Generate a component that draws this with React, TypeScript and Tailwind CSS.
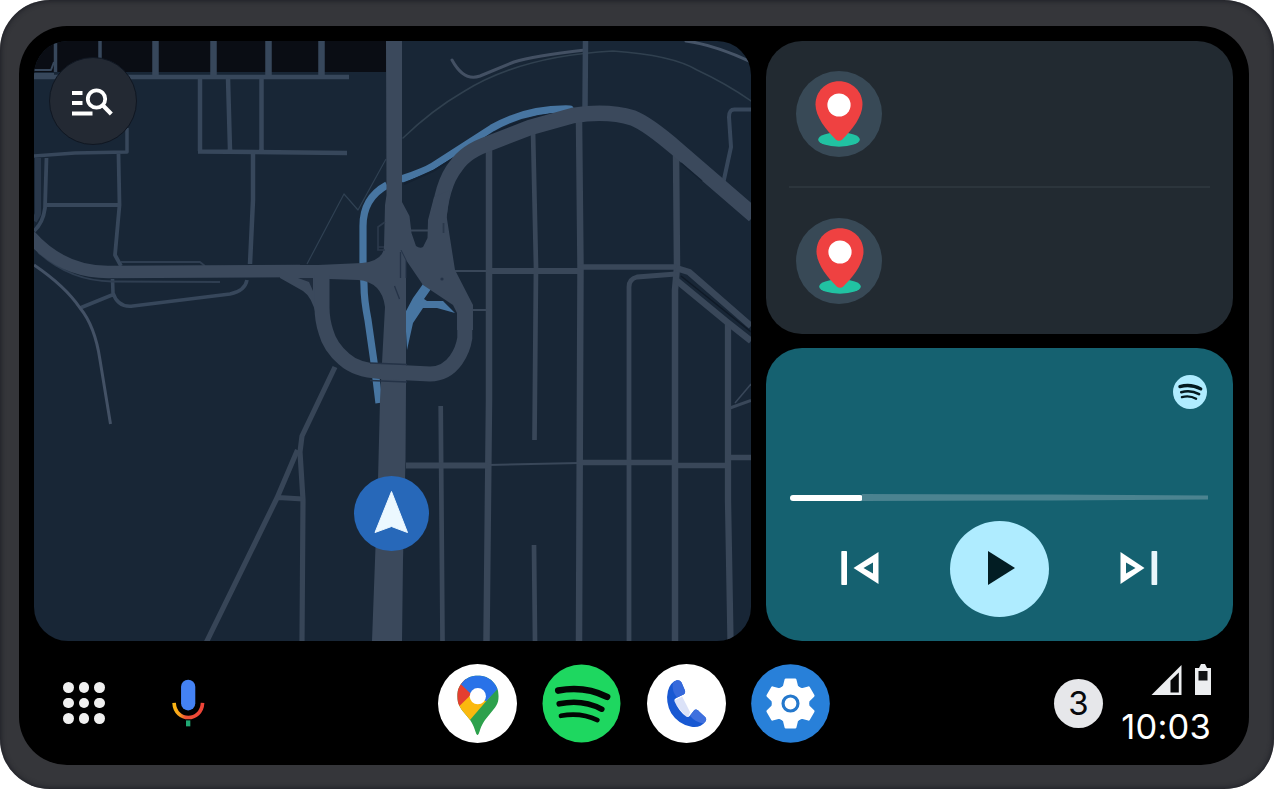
import React from "react";

const GEAR_TEETH = [0, 60, 120, 180, 240, 300];
const GRID_DOTS = [0, 1, 2, 3, 4, 5, 6, 7, 8];

function RoadMap() {
  return (
    <svg viewBox="34 41 717 600" className="block h-full w-full" fill="none">
      <rect x="34" y="41" width="717" height="600" fill="#182636" />
      <rect x="34" y="41" width="352" height="31" fill="#0a0d14" />

      {/* north-west blocks */}
      <g stroke="#37475b" strokeLinejoin="round">
        <path d="M155.500 41V77M213.500 41V77M268.500 41V77M321.500 41V77" strokeWidth="6.500" />
        <path d="M100 41V70M55.500 41V72" strokeWidth="3.500" />
        <path d="M34 70H51L54 62M34 74H54" strokeWidth="2" />
        <path d="M34 77H130L349 77" strokeWidth="4.500" />
        <path d="M200 78V151M228 78L230 150M261.500 78V150M198 151.500L347 153" strokeWidth="4.500" />
        <path d="M253 154V200L250 264" strokeWidth="4.500" />
        <path d="M34 156L75 153L127 152V128" strokeWidth="3.500" />
        <path d="M118.500 154L119.500 205L115 255L121 266" strokeWidth="3.800" />
        <path d="M46.500 158L45 208Q43 223 34 231M46 205H118" strokeWidth="3.800" />
        <path d="M38 158V214L34 221" strokeWidth="6" stroke="#29384b" />
        <path d="M112.500 279L113 293Q118 308 133 306L230 294Q245 291 247 280M80 308L112 295" strokeWidth="3.600" />
        <path d="M34 265Q65 286 80 308Q95 326 100 360L110.500 424" strokeWidth="3" stroke="#435165" />
        <path d="M38 252Q70 281 112 281.500L220 282M121 262H200L205 266" strokeWidth="1.800" stroke="#2f3e51" />
        <path d="M386 159L358 210L344 194L307 264" strokeWidth="1.200" stroke="#2f4052" />
      </g>

      {/* north-east curves */}
      <g stroke="#37475b" strokeLinecap="round" strokeLinejoin="round">
        <path d="M403 138Q432 110 463 92Q520 56 613 51Q672 55 697 70Q727 84 751 101" strokeWidth="1.500" stroke="#30404f" />
        <path d="M452 60Q464 82 480 76L514 62Q533 56 585 50" strokeWidth="3" stroke="#435063" />
        <path d="M686 41Q715 45 751 62" strokeWidth="3" stroke="#465467" />
        <path d="M585.500 41L585 108" strokeWidth="5.500" />
        <path d="M751 109.500H735Q729 109 729 117L731 147L723 184" strokeWidth="4" />
      </g>

      {/* street grid */}
      <g stroke="#394759" strokeLinejoin="round">
        <path d="M489 150V400L486.500 641M579 120L580.500 267L579 641M676 150L677 267L675 290V641" strokeWidth="6.500" />
        <path d="M533 130L536 267L534.500 440M534 545L535 641M440.700 406L442.500 641" strokeWidth="4.700" />
        <path d="M676 274L637 277Q629 279 629 287V641" strokeWidth="4.800" />
        <path d="M728 322V500L730.500 641" strokeWidth="6.300" />
        <path d="M489 271H580M406 465.500H488" strokeWidth="6" />
        <path d="M580 267H677M580 462.500H676M676 465.500H728M728 457.500H751" strokeWidth="5.500" />
        <path d="M453 271H489M471 310H487M409 230.500H430M488 465L579 463" strokeWidth="2" />
        <path d="M676 268L689 272L751 326M676 280L727 322L751 341" strokeWidth="6.500" />
        <path d="M681 276L751 332" strokeWidth="1.500" stroke="#101a27" />
        <path d="M730 408L751 400.500" strokeWidth="3" />
        <path d="M735 403L751 384" strokeWidth="1.500" />
      </g>

      {/* south-west */}
      <g stroke="#374557" strokeLinejoin="round">
        <path d="M335 367L302 436L300 452L303 500L302 641" strokeWidth="5.200" />
        <path d="M297.500 450L277 498L206 643M278 497.500L303 499" strokeWidth="5.200" />
      </g>

      {/* highlighted ramps */}
      <g stroke="#4775a1" strokeWidth="7.200">
        <path d="M387 185Q363 198 363 226V262L364 285Q364 300 368 320L374 362L379 403" />
        <path d="M403 178.500Q425 171 433 166L492 128Q527 108 570 109" strokeLinecap="round" />
      </g>
      <path d="M423 284L431 289L424 299L427 301L443 301L455 313L437 308L423 308L413 323L407 350L405 313L413 298Z" fill="#4775a1" />

      {/* motorways */}
      <path d="M404 184L433 171L494 133Q530 114 567 113" stroke="#142131" strokeWidth="2" />
      <path d="M438 226Q441 184 456 166Q466 151 490 143L530 127.500L573 115.500Q607 110 633 118Q648 124 677 149L754 215.500" stroke="#3b495c" strokeWidth="15.500" strokeLinejoin="round" />
      <path d="M681 163L702 181" stroke="#142131" strokeWidth="1.500" />
      <path d="M30 236Q62 272 108 272L300 271" stroke="#3b495c" strokeWidth="12.500" />
      <path
        d="M386 41H402V202L409.500 216L411.500 233L416 246Q420 249 423 247L427.500 238L428 220L434 197L450 190L446.700 217L455 270L473 305V330H457V313L453 305L423 285L406 260V385L405.500 460L403 560L402 641H372L378 480L380 400L385 307Q382 282 358 280L329 279V312L316 315Q312 297 303 291L280 278V265H318L362 263Q383 261 384 247L385 205L386.500 195Z"
        fill="#3b495c"
      />
      <path d="M464.800 305V338Q463 350 456 360Q446 374 430 374L380 371.500Q356 370 344 359Q330 347 326 332Q322 320 322 307V275" stroke="#3b495c" strokeWidth="15" />
      <path d="M298 278H313V291L309 282Z" fill="#1f2c3d" />
      <path d="M370 363L407 364.500M370 380.500L407 382M400.500 252V278M394.500 286L399.500 299" stroke="#253347" strokeWidth="1.300" />
      <path d="M401 250L406 260V278" stroke="#253347" strokeWidth="1" />
      <path d="M443.500 223V233M385 222L378 227V250H385M378 247H384" stroke="#2b394b" strokeWidth="1.700" />
      <circle cx="442" cy="279" r="1.600" fill="#253347" />

      {/* current position */}
      <circle cx="391.500" cy="513.500" r="37.500" fill="#2768b9" />
      <path d="M391.500 491.500L407.500 532.500L391.500 526.500L375 532.500Z" fill="#ecf8ff" stroke="#ecf8ff" strokeLinejoin="round" />
    </svg>
  );
}

function SearchButton() {
  return (
    <button className="absolute left-[15px] top-[16px] size-[88px] rounded-full border border-[#101722] bg-[#232933]" aria-label="Search">
      <svg viewBox="49.500 57 88 88" className="-m-px block size-[88px]" fill="none" stroke="#fff" strokeWidth="3.800">
        <path d="M72.500 93H83M72.500 103H83M72.500 113.500H93" />
        <circle cx="97" cy="99" r="8.700" />
        <path d="M103.500 105.500L111.800 114" strokeWidth="4.200" />
      </svg>
    </button>
  );
}

function Pin() {
  return (
    <svg viewBox="0 0 48 66" className="h-[66px] w-[48px]">
      <ellipse cx="24" cy="58.500" rx="20.800" ry="7.200" fill="#21c2a2" />
      <path d="M24 0.300C10.800 0.300 0.500 10.500 0.500 23.500C0.500 35.500 11 49 20.500 58.200Q24 61.300 27.500 58.200C37 49 47.500 35.500 47.500 23.500C47.500 10.500 37.200 0.300 24 0.300Z" fill="#ef4141" />
      <circle cx="24" cy="24" r="11.600" fill="#fff" />
    </svg>
  );
}

function SpotifyMark({ small = false }: { small?: boolean }) {
  return small ? (
    <svg viewBox="1238 105 103 103" className="size-[34px]" fill="none" stroke="#03191f" strokeLinecap="round">
      <circle cx="1289.500" cy="156.500" r="51.500" fill="#afecff" stroke="none" />
      <path d="M1259 140Q1292 131 1322 147" strokeWidth="10" />
      <path d="M1263 157Q1292 149 1317 163" strokeWidth="8" />
      <path d="M1265 172Q1289 166 1308 177" strokeWidth="7" />
    </svg>
  ) : (
    <svg viewBox="368 70 236 238" className="size-[79px]" fill="none" stroke="#020603" strokeLinecap="round">
      <circle cx="486" cy="189" r="117.500" fill="#1ed760" stroke="none" />
      <path d="M416 150Q495 135 563 169" strokeWidth="20" />
      <path d="M419 190Q488 175 547 206" strokeWidth="17" />
      <path d="M424 226Q484 215 534 239" strokeWidth="14" />
    </svg>
  );
}

function MapsIcon() {
  return (
    <svg viewBox="53 70 238 238" className="size-[79px]">
      <defs>
        <clipPath id="maps-pin">
          <path d="M173 105C138 105 111 132 111 167C111 190 121 204 133 218C151 238 160 252 166 274Q172 294 178 274C184 252 194 238 211 218C225 202 236 190 236 167C236 132 208 105 173 105Z" />
        </clipPath>
      </defs>
      <circle cx="172" cy="189" r="119" fill="#fff" />
      <g clipPath="url(#maps-pin)">
        <rect x="105" y="100" width="140" height="190" fill="#2da14c" />
        <path d="M105 200L173 128L211 167L148 240L105 240Z" fill="#fbb90e" />
        <path d="M100 100H128L173 167L153 162L116 198L100 200Z" fill="#e43f30" />
        <path d="M122 131L145 100H240V137L198 182L148 156Z" fill="#2972e8" />
      </g>
      <circle cx="173" cy="167" r="24.500" fill="#fff" />
    </svg>
  );
}

function PhoneIcon() {
  return (
    <svg viewBox="680 70 238 238" className="size-[79px]">
      <circle cx="799" cy="189" r="119" fill="#fff" />
      <path d="M759 182L786 168L810 215L802 234Z" fill="#dbe2f8" />
      <path d="M770 119Q779 117 784 126L794 149Q797 158 790 162L767 173Q760 177 763 183Q777 214 799 229Q805 232 809 226L821 211Q826 205 833 209L855 230Q861 236 856 243Q841 263 814 259Q775 252 753 218Q735 186 743 151Q751 124 770 119Z" fill="#1858d2" />
      <path d="M770 119Q779 117 784 126L794 149Q797 158 790 162L770 171Q754 151 758 127Q762 121 770 119Z" fill="#3669db" />
      <path d="M809 226L821 211Q826 205 833 209L855 230Q861 236 856 243L850 249Q826 246 809 226Z" fill="#3f70de" />
    </svg>
  );
}

function SettingsIcon() {
  return (
    <svg viewBox="993 70 238 238" className="size-[79px]">
      <circle cx="1112" cy="189" r="118.500" fill="#2880d9" />
      <g fill="#fff" stroke="#fff" strokeWidth="8" strokeLinejoin="round">
        <circle cx="1112" cy="189" r="51" />
        {GEAR_TEETH.map((angle) => (
          <path key={angle} d="M1098 118H1126L1131 138L1144 149V160H1080V149L1093 138Z" transform={`rotate(${angle} 1112 189)`} />
        ))}
      </g>
      <circle cx="1112" cy="189" r="22.500" fill="#fff" stroke="#2478cc" strokeWidth="9.500" />
    </svg>
  );
}

function MicIcon() {
  return (
    <svg viewBox="513 118 102 145" className="h-[48px] w-[34px]" fill="none">
      <defs>
        <linearGradient id="mic-arc" gradientUnits="userSpaceOnUse" x1="517" y1="0" x2="613" y2="0">
          <stop offset="0" stopColor="#fbbc12" />
          <stop offset="0.220" stopColor="#f9a01c" />
          <stop offset="0.400" stopColor="#ee5335" />
          <stop offset="1" stopColor="#ee4238" />
        </linearGradient>
      </defs>
      <rect x="543" y="120" width="43" height="93" rx="21.500" fill="#4482f4" />
      <path d="M522 190C525 249 605 249 608 190" stroke="url(#mic-arc)" strokeWidth="11" />
      <path d="M564.500 243V261" stroke="#20a873" strokeWidth="13" />
    </svg>
  );
}

function Player() {
  return (
    <section className="flex flex-col rounded-[36px] bg-[#156170] px-6 pt-[27px]">
      <div className="flex justify-end pr-[2px]">
        <SpotifyMark small />
      </div>
      <div className="mt-[85px] flex h-[7px] items-center">
        <div className="h-[6px] w-[73px] rounded-full bg-white" />
        <svg viewBox="0 0 346 7" className="-ml-px h-[7px] w-[346px]">
          <path d="M0 0L190 0.500L346 1.500V5.500L190 6.500L0 7Z" fill="#4b8390" />
        </svg>
      </div>
      <div className="mt-5 flex items-center justify-between pl-[51px] pr-[51px]">
        <button className="pb-[2px]" aria-label="Previous">
          <svg viewBox="841 551 39 34" className="block h-[34px] w-[39px]">
            <rect x="841.300" y="551" width="5.700" height="34" rx="0.800" fill="#fff" />
            <path d="M878.500 552V584L853.500 568Z M873 562.500L863.500 568L873 573.500Z" fill="#fff" fillRule="evenodd" />
          </svg>
        </button>
        <button className="flex h-[96px] w-[99px] items-center justify-center rounded-[50%] bg-[#afecff]" aria-label="Play">
          <svg viewBox="0 0 27 34" className="ml-[4px] mt-[-2px] h-[34px] w-[27px]">
            <path d="M0 0L27 17L0 34Z" fill="#021d23" />
          </svg>
        </button>
        <button className="pb-[2px]" aria-label="Next">
          <svg viewBox="1119 551 39 34" className="block h-[34px] w-[39px]">
            <path d="M1120.500 552V584L1144.500 568Z M1126 562.500L1135.500 568L1126 573.500Z" fill="#fff" fillRule="evenodd" />
            <rect x="1151.500" y="551" width="5.700" height="34" rx="0.800" fill="#e9f6fb" />
          </svg>
        </button>
      </div>
    </section>
  );
}

function Destinations() {
  return (
    <section className="rounded-[36px] bg-[#222a31] px-[23px]">
      <div className="flex h-[147px] items-center border-b-2 border-[#2c353c] pl-[7px]">
        <div className="flex size-[86px] items-center justify-center rounded-full bg-[#384956]">
          <Pin />
        </div>
      </div>
      <div className="flex h-[146px] items-center pl-[7px]">
        <div className="flex size-[86px] items-center justify-center rounded-full bg-[#384956] pl-[2px]">
          <Pin />
        </div>
      </div>
    </section>
  );
}

function Dock() {
  return (
    <nav className="flex h-[124px] items-center pl-[44px] pr-[38px]">
      <button className="grid grid-cols-3 gap-[5px]" aria-label="All apps">
        {GRID_DOTS.map((dot) => (
          <span key={dot} className="size-[10.500px] rounded-full bg-[#f0f0f0]" />
        ))}
      </button>
      <button className="ml-[66px]" aria-label="Assistant">
        <MicIcon />
      </button>
      <div className="ml-[233.200px] flex gap-[25.500px]">
        <MapsIcon />
        <SpotifyMark />
        <PhoneIcon />
        <SettingsIcon />
      </div>
      <div className="ml-auto flex items-center gap-[19px]">
        <span className="flex size-[49px] items-center justify-center rounded-full bg-[#e6e7ea] font-['Inter',sans-serif] text-[33px] leading-none text-[#07090c]">
          3
        </span>
        <div className="flex w-[89px] flex-col items-end pt-[2px]">
          <svg viewBox="1151 664 60 32" className="h-[32px] w-[60px]">
            <path d="M1151.500 695L1181.500 665V695Z" fill="#eceef0" />
            <path d="M1170.500 680.500L1178.800 672.500V692.500H1170.500Z" fill="#050607" />
            <path d="M1195 668H1199L1201 664H1205L1207 668H1211V695H1195Z" fill="#eceef0" />
            <rect x="1198.500" y="671" width="9" height="9.500" fill="#101214" />
          </svg>
          <time className="mt-[13px] whitespace-nowrap font-['Inter',sans-serif] text-[34.500px] leading-[36px] tracking-[0.2px] text-white">10:03</time>
        </div>
      </div>
    </nav>
  );
}

export default function App() {
  return (
    <div className="h-[789px] w-[1274px] overflow-hidden bg-white">
      <div className="h-full w-full rounded-[50px] bg-[#35363a] pb-[24px] pl-[19px] pr-[25px] pt-[26px] shadow-[inset_0_0_5px_1px_#1e1f26]">
        <div className="flex h-full flex-col rounded-[48px] bg-black pt-[15px]">
          <main className="grid h-[600px] grid-cols-[717px_467px] gap-[15px] pl-[15px]">
            <section className="relative overflow-hidden rounded-[34px]">
              <RoadMap />
              <SearchButton />
            </section>
            <div className="grid grid-rows-[293px_293px] gap-[14px]">
              <Destinations />
              <Player />
            </div>
          </main>
          <Dock />
        </div>
      </div>
    </div>
  );
}
